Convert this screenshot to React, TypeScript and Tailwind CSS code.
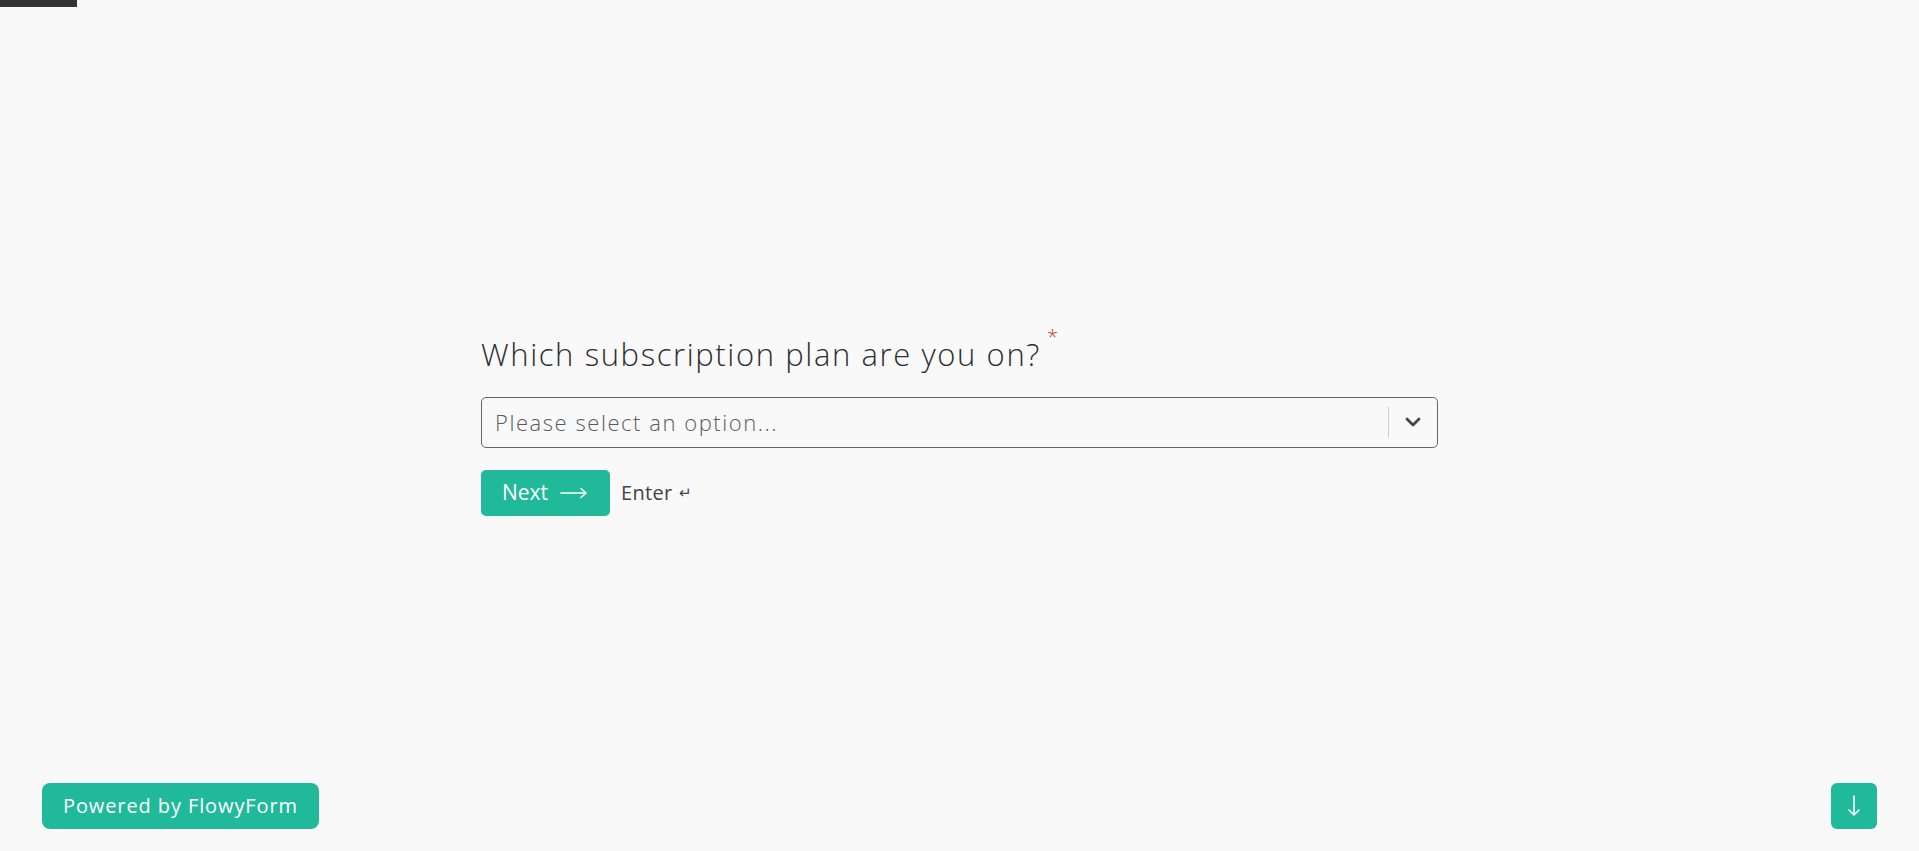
import React from "react";

export default function App() {
  return (
    <div className="relative h-[851px] w-full overflow-hidden bg-[#f9f9fa] font-['Open_Sans',sans-serif]">
      <div className="absolute left-0 top-0 h-[7px] w-[77px] bg-[#333333]" />
      <div className="flex h-full items-center justify-center pb-[2px]">
        <div className="w-[957px]">
          <h1 className="relative inline-block text-[31px] font-light leading-[40px] text-[#2f2f2f] tracking-[1.6px]">
            Which subscription plan are you on?
            <span className="absolute -right-[17px] top-[-17px] text-[20px] tracking-normal text-[#c0392b]">*</span>
          </h1>
          <div className="mt-[23px] flex h-[51px] items-center rounded-[5px] border border-[#666666] bg-transparent">
            <div className="flex-1 pl-[13px] text-[22px] font-light tracking-[1.55px] text-[#5a5a5a]">Please select an option...</div>
            <div className="h-[30px] w-px bg-[#cccccc]" />
            <div className="flex w-[48px] items-center justify-center">
              <svg width="16" height="10" viewBox="0 0 16 10" fill="none">
                <path d="M2 2l6 6 6-6" stroke="#444444" strokeWidth="2.8" strokeLinecap="round" strokeLinejoin="round" />
              </svg>
            </div>
          </div>
          <div className="mt-[22px] flex items-center">
            <button className="flex h-[46px] w-[129px] items-center rounded-[5px] bg-[#20b99a] pl-[21px] text-[21px] text-white">
              <span>Next</span>
              <svg className="ml-[12px]" width="28" height="12" viewBox="0 0 28 12" fill="none">
                <path d="M1 6h25M21 1.5l5 4.5-5 4.5" stroke="white" strokeWidth="1.6" strokeLinecap="round" strokeLinejoin="round" />
              </svg>
            </button>
            <span className="ml-[11px] text-[20px] tracking-[0.3px] text-[#444444]">Enter</span>
            <span className="ml-[7px] text-[15px] text-[#444444]">↵</span>
          </div>
        </div>
      </div>
      <div className="absolute bottom-[22px] left-[42px] flex h-[46px] w-[277px] items-center justify-center rounded-[8px] bg-[#20b99a] text-[20px] tracking-[0.9px] text-white">
        Powered by FlowyForm
      </div>
      <button className="absolute bottom-[22px] right-[42px] flex h-[46px] w-[46px] items-center justify-center rounded-[6px] bg-[#20b99a]">
        <svg width="14" height="24" viewBox="0 0 14 24" fill="none">
          <path d="M7 2v19M2 16l5 5 5-5" stroke="white" strokeWidth="1.6" strokeLinecap="round" strokeLinejoin="round" />
        </svg>
      </button>
    </div>
  );
}
